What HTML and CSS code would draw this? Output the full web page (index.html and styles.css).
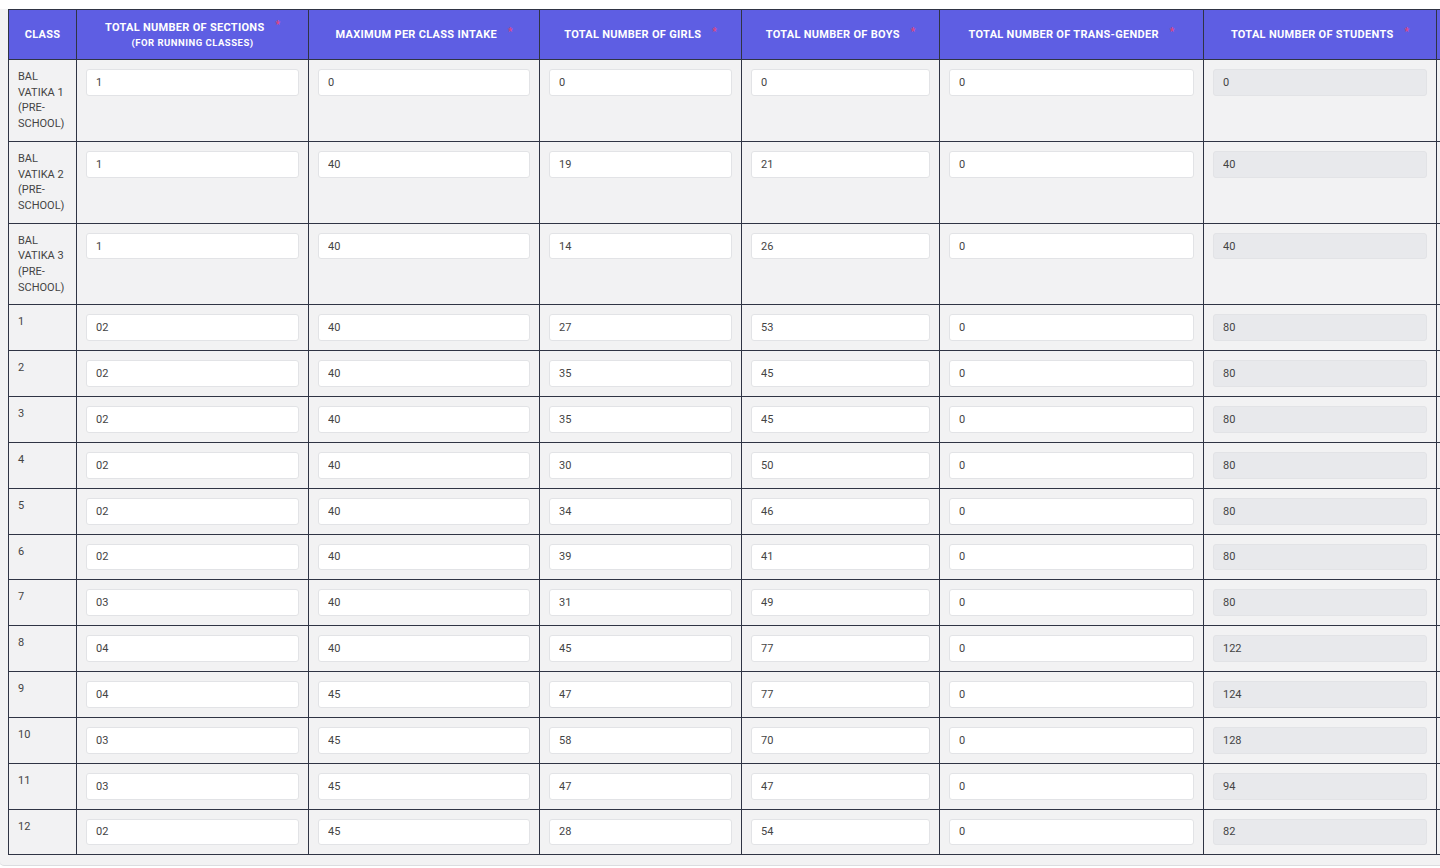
FILE: index.html
```html
<!DOCTYPE html>
<html lang="en">
<head>
<meta charset="utf-8">
<title>Enrolment</title>
<link rel="stylesheet" href="styles.css">
</head>
<body>
<div class="panel">
  <table class="grid">
    <colgroup>
      <col class="c-class">
      <col class="c-sec">
      <col class="c-max">
      <col class="c-girls">
      <col class="c-boys">
      <col class="c-trans">
      <col class="c-total">
      <col class="c-extra">
    </colgroup>
    <thead>
      <tr>
        <th>CLASS</th>
        <th><span class="h">TOTAL NUMBER OF SECTIONS<span class="req">*</span></span><span class="sub">(FOR RUNNING CLASSES)</span></th>
        <th><span class="h">MAXIMUM PER CLASS INTAKE<span class="req">*</span></span></th>
        <th><span class="h">TOTAL NUMBER OF GIRLS<span class="req">*</span></span></th>
        <th><span class="h">TOTAL NUMBER OF BOYS<span class="req">*</span></span></th>
        <th><span class="h">TOTAL NUMBER OF TRANS-GENDER<span class="req">*</span></span></th>
        <th><span class="h">TOTAL NUMBER OF STUDENTS<span class="req">*</span></span></th>
        <th></th>
      </tr>
    </thead>
    <tbody>
      <tr><td class="cls">BAL VATIKA 1 (PRE-SCHOOL)</td><td><input class="fld" value="1"></td><td><input class="fld" value="0"></td><td><input class="fld" value="0"></td><td><input class="fld" value="0"></td><td><input class="fld" value="0"></td><td><input class="fld ro" value="0" readonly></td><td></td></tr>
      <tr><td class="cls">BAL VATIKA 2 (PRE-SCHOOL)</td><td><input class="fld" value="1"></td><td><input class="fld" value="40"></td><td><input class="fld" value="19"></td><td><input class="fld" value="21"></td><td><input class="fld" value="0"></td><td><input class="fld ro" value="40" readonly></td><td></td></tr>
      <tr><td class="cls">BAL VATIKA 3 (PRE-SCHOOL)</td><td><input class="fld" value="1"></td><td><input class="fld" value="40"></td><td><input class="fld" value="14"></td><td><input class="fld" value="26"></td><td><input class="fld" value="0"></td><td><input class="fld ro" value="40" readonly></td><td></td></tr>
      <tr><td class="cls">1</td><td><input class="fld" value="02"></td><td><input class="fld" value="40"></td><td><input class="fld" value="27"></td><td><input class="fld" value="53"></td><td><input class="fld" value="0"></td><td><input class="fld ro" value="80" readonly></td><td></td></tr>
      <tr><td class="cls">2</td><td><input class="fld" value="02"></td><td><input class="fld" value="40"></td><td><input class="fld" value="35"></td><td><input class="fld" value="45"></td><td><input class="fld" value="0"></td><td><input class="fld ro" value="80" readonly></td><td></td></tr>
      <tr><td class="cls">3</td><td><input class="fld" value="02"></td><td><input class="fld" value="40"></td><td><input class="fld" value="35"></td><td><input class="fld" value="45"></td><td><input class="fld" value="0"></td><td><input class="fld ro" value="80" readonly></td><td></td></tr>
      <tr><td class="cls">4</td><td><input class="fld" value="02"></td><td><input class="fld" value="40"></td><td><input class="fld" value="30"></td><td><input class="fld" value="50"></td><td><input class="fld" value="0"></td><td><input class="fld ro" value="80" readonly></td><td></td></tr>
      <tr><td class="cls">5</td><td><input class="fld" value="02"></td><td><input class="fld" value="40"></td><td><input class="fld" value="34"></td><td><input class="fld" value="46"></td><td><input class="fld" value="0"></td><td><input class="fld ro" value="80" readonly></td><td></td></tr>
      <tr><td class="cls">6</td><td><input class="fld" value="02"></td><td><input class="fld" value="40"></td><td><input class="fld" value="39"></td><td><input class="fld" value="41"></td><td><input class="fld" value="0"></td><td><input class="fld ro" value="80" readonly></td><td></td></tr>
      <tr><td class="cls">7</td><td><input class="fld" value="03"></td><td><input class="fld" value="40"></td><td><input class="fld" value="31"></td><td><input class="fld" value="49"></td><td><input class="fld" value="0"></td><td><input class="fld ro" value="80" readonly></td><td></td></tr>
      <tr><td class="cls">8</td><td><input class="fld" value="04"></td><td><input class="fld" value="40"></td><td><input class="fld" value="45"></td><td><input class="fld" value="77"></td><td><input class="fld" value="0"></td><td><input class="fld ro" value="122" readonly></td><td></td></tr>
      <tr><td class="cls">9</td><td><input class="fld" value="04"></td><td><input class="fld" value="45"></td><td><input class="fld" value="47"></td><td><input class="fld" value="77"></td><td><input class="fld" value="0"></td><td><input class="fld ro" value="124" readonly></td><td></td></tr>
      <tr><td class="cls">10</td><td><input class="fld" value="03"></td><td><input class="fld" value="45"></td><td><input class="fld" value="58"></td><td><input class="fld" value="70"></td><td><input class="fld" value="0"></td><td><input class="fld ro" value="128" readonly></td><td></td></tr>
      <tr><td class="cls">11</td><td><input class="fld" value="03"></td><td><input class="fld" value="45"></td><td><input class="fld" value="47"></td><td><input class="fld" value="47"></td><td><input class="fld" value="0"></td><td><input class="fld ro" value="94" readonly></td><td></td></tr>
      <tr><td class="cls">12</td><td><input class="fld" value="02"></td><td><input class="fld" value="45"></td><td><input class="fld" value="28"></td><td><input class="fld" value="54"></td><td><input class="fld" value="0"></td><td><input class="fld ro" value="82" readonly></td><td></td></tr>
    </tbody>
  </table>
</div>
</body>
</html>
```

FILE: styles.css
```css
html, body {
  margin: 0;
  padding: 0;
  background: #ffffff;
  overflow: hidden;
  font-family: Roboto, "Liberation Sans", Arial, sans-serif;
}

.panel {
  margin-top: 9px;
  width: 1480px;
  background: #f2f2f3;
  padding: 0 0 10px 8px;
  border-bottom: 1px solid #dcdde0;
  border-left: 1px solid #e4e5e8;
  border-radius: 0 0 5px 5px;
  box-sizing: border-box;
  margin-left: -1px;
}

.grid {
  border-collapse: collapse;
  table-layout: fixed;
  width: 1578px;
}

.c-class { width: 68px; }
.c-sec { width: 232px; }
.c-max { width: 231px; }
.c-girls { width: 202px; }
.c-boys { width: 198px; }
.c-trans { width: 264px; }
.c-total { width: 233px; }
.c-extra { width: 150px; }

.grid th,
.grid td {
  border: 1px solid #2f3444;
}

.grid th {
  background: #5e5ee3;
  color: #ffffff;
  font-size: 11px;
  font-weight: 700;
  letter-spacing: 0.3px;
  text-align: center;
  vertical-align: middle;
  height: 49px;
  padding: 0 6px;
  line-height: 15px;
}

.h {
  display: block;
  white-space: nowrap;
}

.sub {
  display: block;
  font-size: 9.5px;
  letter-spacing: 0.5px;
  line-height: 13px;
  margin-top: 1px;
}

.req {
  color: #e2447a;
  font-size: 10px;
  font-weight: 700;
  margin-left: 11px;
  position: relative;
  top: -3px;
  letter-spacing: 0;
}

.grid td {
  background: #f2f2f3;
  padding: 9px;
  vertical-align: top;
  font-size: 11px;
  line-height: 15.7px;
  color: #444444;
}

.fld {
  display: block;
  width: 100%;
  height: 26.83px;
  box-sizing: border-box;
  margin: 0;
  padding: 0 9px;
  border: 1px solid #e2e3e6;
  border-radius: 3px;
  background: #ffffff;
  font-family: Roboto, "Liberation Sans", Arial, sans-serif;
  font-size: 11px;
  color: #444444;
  outline: none;
}

.fld.ro {
  background: #e8e9ec;
  border-color: #e2e3e6;
}
```
